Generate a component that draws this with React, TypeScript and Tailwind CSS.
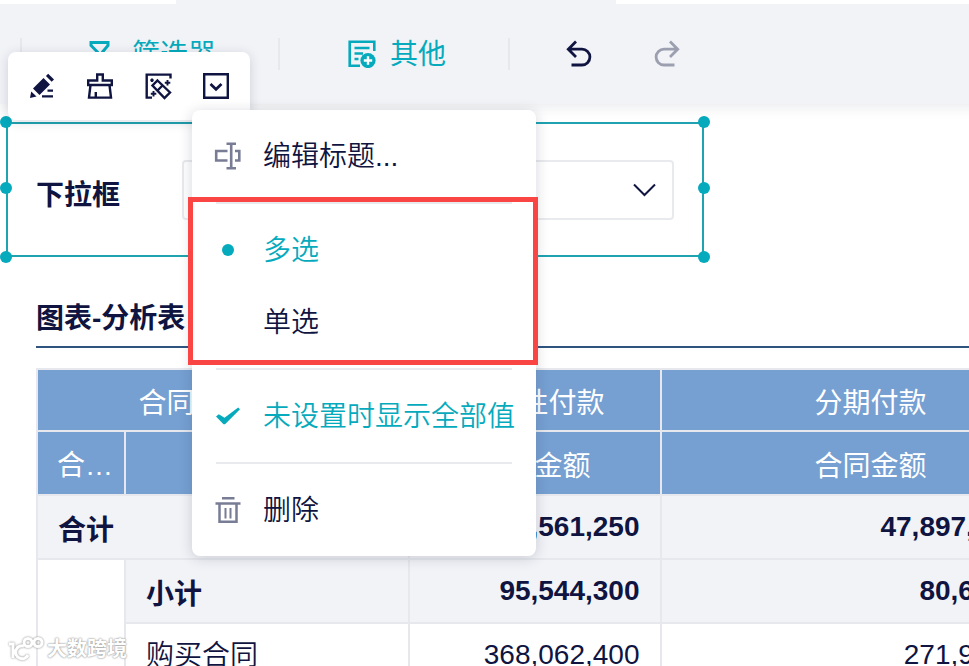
import React from 'react';

type IconProps = { className?: string };

const FilterIcon = ({ className }: IconProps) => (
    <svg viewBox="0 0 28 28" className={className} fill="none" stroke="currentColor" strokeWidth="3">
        <path d="M4 2.500h17v3L15.500 12v10l-5 2.500V12L4 5.500z" />
    </svg>
);

const OtherIcon = ({ className }: IconProps) => (
    <svg viewBox="0 0 28 28" className={className} fill="none" stroke="currentColor" strokeWidth="2.6">
        <path d="M12 25.800H1.700V1.700h24.600V11" />
        <path d="M6.500 8h15M6.500 13.500h8.500M6.500 19h4" />
        <circle cx="20" cy="20.500" r="7.600" fill="currentColor" stroke="none" />
        <path d="M20 16.300v8.400M15.800 20.500h8.400" stroke="#fff" strokeWidth="2.400" />
    </svg>
);

const UndoIcon = ({ className }: IconProps) => (
    <svg viewBox="0 0 26 28" className={className} fill="none" stroke="currentColor" strokeWidth="2.800">
        <path d="M10 1.500 2.300 9.200 10 16.900M2.300 9.200H16a7.900 7.900 0 0 1 0 15.800H5.500" />
    </svg>
);

const PencilIcon = () => (
    <svg viewBox="0 0 28 28" className="size-7" fill="#0f1440">
        <path d="M15.500 6 22 12.500 11.500 23 5 16.500z" />
        <path d="M20.200 1.700 26 7.500 23.700 9.800 17.900 4z" />
        <path d="M3.200 19.500 8.500 24.600 2 26z" />
        <path d="M19.500 17.500H25v2.200h-5.500zM14 23.300h11v2.200H14z" />
    </svg>
);

const BrushIcon = () => (
    <svg viewBox="0 0 28 28" className="size-7" fill="none" stroke="#0f1440" strokeWidth="2.400">
        <path d="M2.200 13V8.500h9V2.500h5.600v6h9V13z" />
        <path d="M4.500 13 3 25.600h22L23.500 13M9.800 25.600v-5.500" />
    </svg>
);

const MagicIcon = () => (
    <svg viewBox="0 0 28 28" className="size-7" fill="none" stroke="#0f1440" strokeWidth="2.400">
        <path d="M8 25.600H2.700V2.600H26.500V6.500" />
        <path d="M13.500 8.500 26 20.500 20.500 26 8.500 13.500zM18.500 13.500 13.500 18.500" />
        <path d="M23.500 8v5.500M20.800 10.700h5.500M9.500 19v5.500M6.800 21.700h5.500M8 6.500v3.500M6.300 8.200h3.400" strokeWidth="1.900" />
    </svg>
);

const BoxedArrowIcon = () => (
    <svg viewBox="0 0 28 28" className="size-7" fill="none" stroke="#0f1440" strokeWidth="2.400">
        <path d="M2.200 2.200h23.600v23.600H2.200z" />
        <path d="m8.500 12 5.500 5.300 5.500-5.300" strokeWidth="2.700" />
    </svg>
);

const RenameIcon = () => (
    <svg viewBox="0 0 28 28" className="size-7" fill="none" stroke="#787d95" strokeWidth="2.600">
        <path d="M13.500 9H2.200v9.500h11.300M21 9h4.300v9.500H21" />
        <path d="M12.500 1.800h9.500M12.500 26.300h9.500M17.200 1.500v25" />
    </svg>
);

const TrashIcon = () => (
    <svg viewBox="0 0 28 28" className="size-7" fill="none" stroke="#787d95" strokeWidth="2.500">
        <path d="M8 2.300h12.500M1.500 7.500h25M5.500 7.500v18.200h17V7.500" />
        <path d="M11.500 12v10.500M16.500 12v10.500" strokeWidth="2" />
    </svg>
);

const CheckIcon = () => (
    <svg viewBox="0 0 28 28" className="size-7" fill="#06aabd">
        <path d="M2 14.500 4.800 12.300 10.500 15.700 24.200 5.400 26 7.300 11 22.300 9.500 22.300z" />
    </svg>
);

const Dot = () => <span className="size-3 rounded-full bg-[#06aabd]" />;

type MenuItemProps = {
    icon?: React.ReactNode;
    label: string;
    active?: boolean;
};

const MenuItem = ({ icon, label, active }: MenuItemProps) => (
    <button
        className={`flex h-[72px] w-full items-center pl-[22px] text-left text-[28px] [font-weight:350] whitespace-nowrap ${
            active ? 'text-[#06aabd]' : 'text-[#0f1440]'
        }`}
    >
        <span className="mr-[21px] flex w-7 shrink-0 justify-center">{icon}</span>
        <span className="pt-px">{label}</span>
    </button>
);

const MenuDivider = () => <div className="mx-6 my-[10px] h-0.5 bg-[#e8eaed]" />;

const ContextMenu = () => (
    <div className="absolute top-[110px] left-[192px] z-30 w-[344px] rounded-lg bg-white py-[10px] shadow-[0_2px_14px_rgba(20,30,60,0.18)]">
        <MenuItem icon={<RenameIcon />} label="编辑标题..." />
        <MenuDivider />
        <MenuItem icon={<Dot />} label="多选" active />
        <MenuItem label="单选" />
        <MenuDivider />
        <MenuItem icon={<CheckIcon />} label="未设置时显示全部值" active />
        <MenuDivider />
        <MenuItem icon={<TrashIcon />} label="删除" />
        <div className="absolute top-[87px] -left-1 h-[168px] w-[350px] border-[5px] border-[#fa4545]" />
    </div>
);

const FloatingTools = () => (
    <div className="absolute top-[52px] left-2 z-20 flex h-[68px] w-[242px] items-center gap-[30px] rounded-lg bg-white pl-5 shadow-[0_2px_12px_rgba(20,30,60,0.16)]">
        <PencilIcon />
        <BrushIcon />
        <MagicIcon />
        <BoxedArrowIcon />
    </div>
);

const Toolbar = () => (
    <header className="relative z-10 -mr-5 h-[104px] bg-[#f2f3f7] shadow-[0_2px_14px_rgba(20,30,60,0.1)]">
        <div className="flex h-1 justify-between">
            <div className="w-44 bg-white" />
            <div className="w-[373px] bg-white" />
        </div>
        <div className="flex h-[100px] items-center pl-5 text-[28px] text-[#06aabd]">
            <div className="h-8 w-0.5 bg-[#e6e8ec]" />
            <FilterIcon className="ml-[65px] size-7" />
            <span className="ml-[17px] w-[84px] pt-0.5">筛选器</span>
            <div className="ml-[62px] h-8 w-0.5 bg-[#e6e8ec]" />
            <OtherIcon className="ml-[68px] size-7" />
            <span className="ml-[14px] w-14 pt-px">其他</span>
            <div className="ml-[62px] h-8 w-0.5 bg-[#e6e8ec]" />
            <UndoIcon className="ml-[56px] h-7 w-[26px] text-[#0f1440]" />
            <UndoIcon className="ml-[62px] h-7 w-[26px] -scale-x-100 text-[#9b9fb0]" />
        </div>
    </header>
);

const handles = [
    '-top-2 -left-2',
    'top-[58px] -left-2',
    '-bottom-2 -left-2',
    '-top-2 -right-2',
    'top-[58px] -right-2',
    '-bottom-2 -right-2',
];

const SelectWidget = () => (
    <section className="relative mt-[18px] ml-1.5 flex h-[135px] w-[698px] items-center border-2 border-[#1fa3b0] pl-7">
        {handles.map((pos) => (
            <span key={pos} className={`absolute size-3 rounded-full bg-[#06aabd] ${pos}`} />
        ))}
        <span className="w-[146px] pt-3 text-[28px] font-bold text-[#0f1440]">下拉框</span>
        <div className="flex h-[60px] w-[492px] items-center justify-end rounded border-2 border-[#e8eaed] pr-[15px]">
            <svg viewBox="0 0 24 14" className="h-3.5 w-6" fill="none" stroke="#0f1440" strokeWidth="2">
                <path d="M1 1.500 11.500 12 22 1.500" />
            </svg>
        </div>
    </section>
);

const headCell = 'border-2 border-[#e6e8ed] bg-[#76a0d2] p-0 pt-2 pr-px font-normal text-white';
const labelCell = 'border-2 border-[#e6e8ed] py-0 pl-5';
const numCell = 'border-2 border-[#e6e8ed] py-0 pr-[20.5px] text-right';

const AnalysisTable = () => (
    <section className="ml-9 w-[1046px]">
        <h2 className="mt-[37px] flex h-[54px] items-center pb-1 text-[28px] font-bold text-[#0f1440]">
            图表-分析表
        </h2>
        <div className="-mt-0.5 h-0.5 bg-[#2f5480]" />
        <table className="mt-5 w-[1046px] table-fixed border-collapse text-[28px] leading-[40px] whitespace-nowrap text-[#0f1440]">
            <colgroup>
                <col className="w-[88px]" />
                <col className="w-[284px]" />
                <col className="w-[252px]" />
                <col className="w-[420px]" />
            </colgroup>
            <thead>
                <tr className="h-[62px]">
                    <th colSpan={2} className={headCell}>合同付款类型</th>
                    <th className={headCell}>一次性付款</th>
                    <th className={headCell}>分期付款</th>
                </tr>
                <tr className="h-[64px]">
                    <th className="border-2 border-[#e6e8ed] bg-[#76a0d2] p-0 pt-1.5 pl-[19px] text-left font-normal text-white">合…</th>
                    <th className={headCell}>合同类型</th>
                    <th className={headCell}>合同金额</th>
                    <th className={headCell}>合同金额</th>
                </tr>
            </thead>
            <tbody>
                <tr className="h-[64px] bg-[#f2f3f7] font-bold">
                    <td colSpan={2} className={`${labelCell} pt-2`}>合计</td>
                    <td className={numCell}>463,561,250</td>
                    <td className={numCell}>47,897,250.50</td>
                </tr>
                <tr className="h-[64px] bg-[#f2f3f7] font-bold">
                    <td rowSpan={2} className="border-2 border-[#e6e8ed] bg-white" />
                    <td className={`${labelCell} pt-2`}>小计</td>
                    <td className={numCell}>95,544,300</td>
                    <td className={numCell}>80,643,200</td>
                </tr>
                <tr className="h-[64px]">
                    <td className={`${labelCell} pt-px [font-weight:350]`}>购买合同</td>
                    <td className={numCell}>368,062,400</td>
                    <td className={numCell}>271,930,500</td>
                </tr>
            </tbody>
        </table>
    </section>
);

const Watermark = () => (
    <div className="absolute bottom-[5px] left-2 z-20 flex items-center gap-[3px] text-[20px] leading-6 font-bold text-white [text-shadow:0_0_2px_#999,0_0_2px_#aaa]">
        <svg viewBox="0 0 36 24" className="h-6 w-9 drop-shadow-[0_0_1px_#888]" fill="none" stroke="#fff" strokeWidth="3">
            <path d="M1 7h4v14M16 9a6.500 6.500 0 1 0 4 9" />
            <circle cx="20" cy="5.500" r="4" />
            <circle cx="30" cy="5.500" r="4" />
        </svg>
        大数跨境
    </div>
);

const App = () => (
    <main className="relative h-[666px] w-[969px] overflow-hidden bg-white font-['Liberation_Sans','Noto_Sans_CJK_SC',sans-serif]">
        <Toolbar />
        <SelectWidget />
        <AnalysisTable />
        <FloatingTools />
        <ContextMenu />
        <Watermark />
    </main>
);

export default App;
